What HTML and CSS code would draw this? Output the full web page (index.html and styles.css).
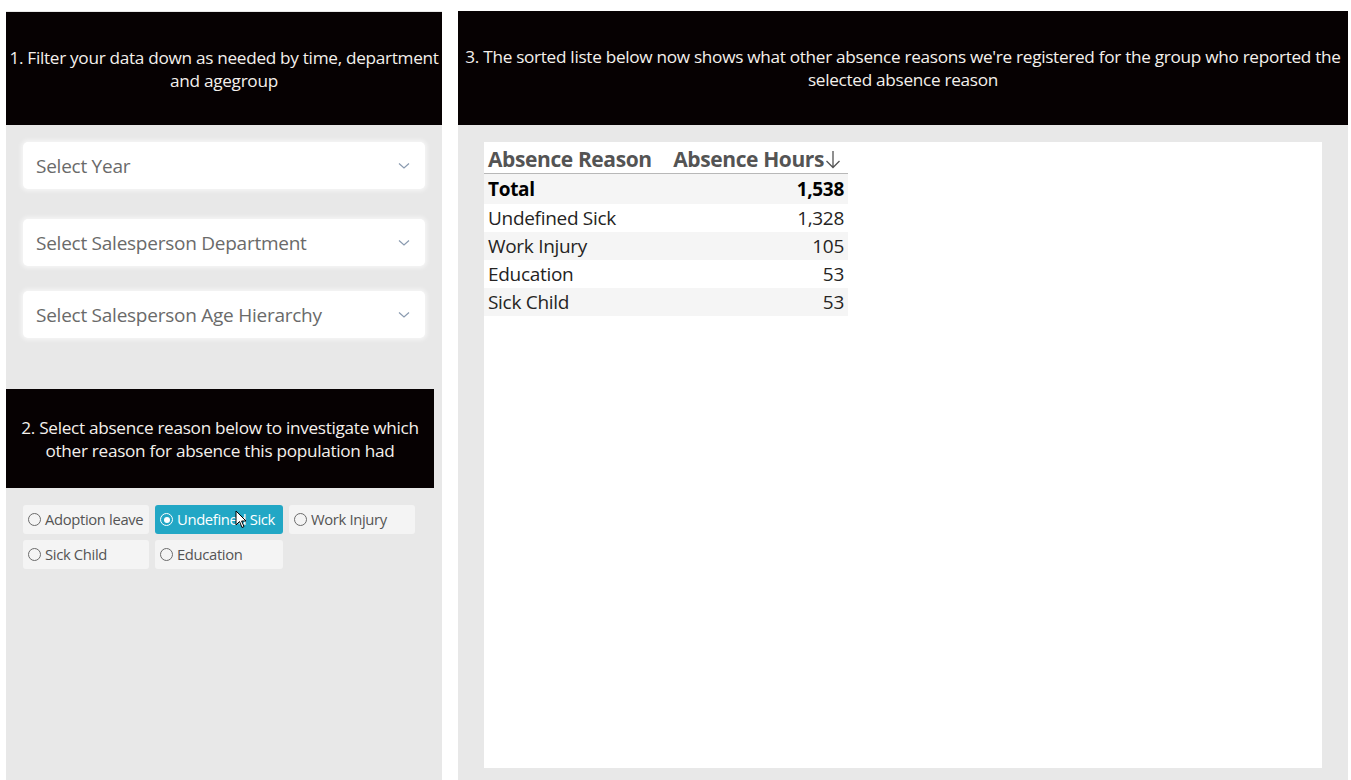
FILE: index.html
```html
<!DOCTYPE html>
<html>
<head>
<meta charset="utf-8">
<link rel="stylesheet" href="styles.css">
</head>
<body>
<div class="page">
  <section class="left">
    <div class="hdr hdr1">1. Filter your data down as needed by time, department<br>and agegroup</div>
    <div class="filters">
      <div class="dd dd1"><span>Select Year</span><svg class="chev" viewBox="0 0 12 8" width="12" height="8"><path d="M1 1.5 L6 6 L11 1.5" fill="none" stroke="#8a9bb0" stroke-width="1.2"/></svg></div>
      <div class="dd dd2"><span>Select Salesperson Department</span><svg class="chev" viewBox="0 0 12 8" width="12" height="8"><path d="M1 1.5 L6 6 L11 1.5" fill="none" stroke="#8a9bb0" stroke-width="1.2"/></svg></div>
      <div class="dd dd3"><span>Select Salesperson Age Hierarchy</span><svg class="chev" viewBox="0 0 12 8" width="12" height="8"><path d="M1 1.5 L6 6 L11 1.5" fill="none" stroke="#8a9bb0" stroke-width="1.2"/></svg></div>
    </div>
    <div class="hdr hdr2">2. Select absence reason below to investigate which<br>other reason for absence this population had</div>
    <div class="chips">
      <div class="chip"><span class="radio"></span>Adoption leave</div>
      <div class="chip sel"><span class="radio on"></span>Undefined Sick
        <svg class="cursor" viewBox="0 0 12 19" width="12" height="19"><path d="M1 1 L1 15 L4.5 11.5 L7 17.5 L9 16.6 L6.6 11 L11 11 Z" fill="#fff" stroke="#000" stroke-width="1"/></svg>
      </div>
      <div class="chip"><span class="radio"></span>Work Injury</div>
      <div class="chip"><span class="radio"></span>Sick Child</div>
      <div class="chip"><span class="radio"></span>Education</div>
    </div>
  </section>
  <section class="right">
    <div class="hdr hdr3">3. The sorted liste below now shows what other absence reasons we're registered for the group who reported the<br>selected absence reason</div>
    <div class="canvas">
      <table class="tbl">
        <thead>
          <tr><th class="c1">Absence Reason</th><th class="c2">Absence Hours<svg class="arr" viewBox="0 0 16 19" width="16" height="19"><path d="M8 1 L8 17.5 M1.5 11 L8 17.5 L14.5 11" fill="none" stroke="#545454" stroke-width="1.3"/></svg></th></tr>
        </thead>
        <tbody>
          <tr class="total alt"><td>Total</td><td class="num">1,538</td></tr>
          <tr><td>Undefined Sick</td><td class="num">1,328</td></tr>
          <tr class="alt"><td>Work Injury</td><td class="num">105</td></tr>
          <tr><td>Education</td><td class="num">53</td></tr>
          <tr class="alt"><td>Sick Child</td><td class="num">53</td></tr>
        </tbody>
      </table>
    </div>
  </section>
</div>
</body>
</html>
```
FILE: styles.css
```css
html, body {
  margin: 0;
  padding: 0;
  background: #ffffff;
  width: 1351px;
  height: 780px;
  overflow: hidden;
  font-family: "Open Sans", "Noto Sans", "DejaVu Sans", sans-serif;
}

.page {
  display: flex;
  align-items: flex-start;
  gap: 16px;
  padding-left: 6px;
  padding-top: 11px;
}

.left {
  width: 436px;
  height: 769px;
  background: #e8e8e8;
  display: flex;
  flex-direction: column;
}

.right {
  width: 890px;
  height: 769px;
  background: #e8e8e8;
  display: flex;
  flex-direction: column;
}

.hdr {
  background: #060102;
  color: #f4f0ec;
  font-size: 17.2px;
  line-height: 23px;
  text-align: center;
  display: flex;
  align-items: center;
  justify-content: center;
  letter-spacing: -0.3px;
  white-space: nowrap;
}

.hdr1 {
  height: 113px;
  margin-top: 1px;
}

.hdr3 {
  height: 114px;
}

.filters {
  display: flex;
  flex-direction: column;
  padding: 17px 17px 0 17px;
}

.dd {
  height: 47px;
  background: #ffffff;
  border-radius: 5px;
  box-shadow: 0 0 4px 2px rgba(255,255,255,0.6);
  display: flex;
  align-items: center;
  justify-content: space-between;
  padding: 0 15px 0 13px;
  color: #6a6a6a;
  font-size: 19px;
  letter-spacing: -0.25px;
}

.dd2 { margin-top: 30px; }
.dd3 { margin-top: 25px; }

.chev { margin-top: 1px; }

.hdr2 {
  width: 428px;
  height: 99px;
  margin-top: 51px;
}

.chips {
  display: grid;
  grid-template-columns: 126px 128px 126px;
  grid-auto-rows: 29px;
  column-gap: 6px;
  row-gap: 6px;
  padding: 17px 0 0 17px;
}

.chip {
  position: relative;
  background: #f4f4f4;
  border-radius: 3px;
  display: flex;
  align-items: center;
  padding-left: 5px;
  padding-bottom: 1px;
  box-sizing: border-box;
  font-size: 14.8px;
  color: #555555;
  letter-spacing: -0.35px;
}

.chip.sel {
  background: #22a7c5;
  color: #ffffff;
}

.radio {
  width: 13px;
  height: 13px;
  border: 1px solid #6b6b6b;
  border-radius: 50%;
  margin-right: 4px;
  margin-top: 1px;
  box-sizing: border-box;
  flex: none;
  position: relative;
}

.radio.on {
  border-color: #ffffff;
}

.radio.on::after {
  content: "";
  position: absolute;
  left: 2.5px;
  top: 2.5px;
  width: 6px;
  height: 6px;
  border-radius: 50%;
  background: #ffffff;
}

.cursor {
  position: absolute;
  left: 80px;
  top: 5px;
}

.canvas {
  background: #ffffff;
  margin: 17px 26px 12px 26px;
  flex: 1;
}

.tbl {
  border-collapse: collapse;
  width: 364px;
  margin-top: 3px;
}

.tbl th {
  font-size: 21px;
  font-weight: 700;
  color: #545454;
  height: 27px;
  padding: 0;
  border-bottom: 1.5px solid #b8b8b8;
  white-space: nowrap;
  letter-spacing: -0.4px;
}

.tbl th.c1 {
  text-align: left;
  padding-left: 4px;
}

.tbl th.c2 {
  text-align: right;
  padding-right: 7px;
}

.arr {
  vertical-align: -2px;
  margin-left: 1px;
}

.tbl td {
  font-size: 19px;
  color: #252423;
  height: 28px;
  padding: 0 4px;
  letter-spacing: -0.3px;
}

.tbl td.num {
  text-align: right;
}

.tbl tr.alt td {
  background: #f5f5f5;
}

.tbl tr.total td {
  font-weight: 700;
  color: #000000;
  height: 30px;
}
```
